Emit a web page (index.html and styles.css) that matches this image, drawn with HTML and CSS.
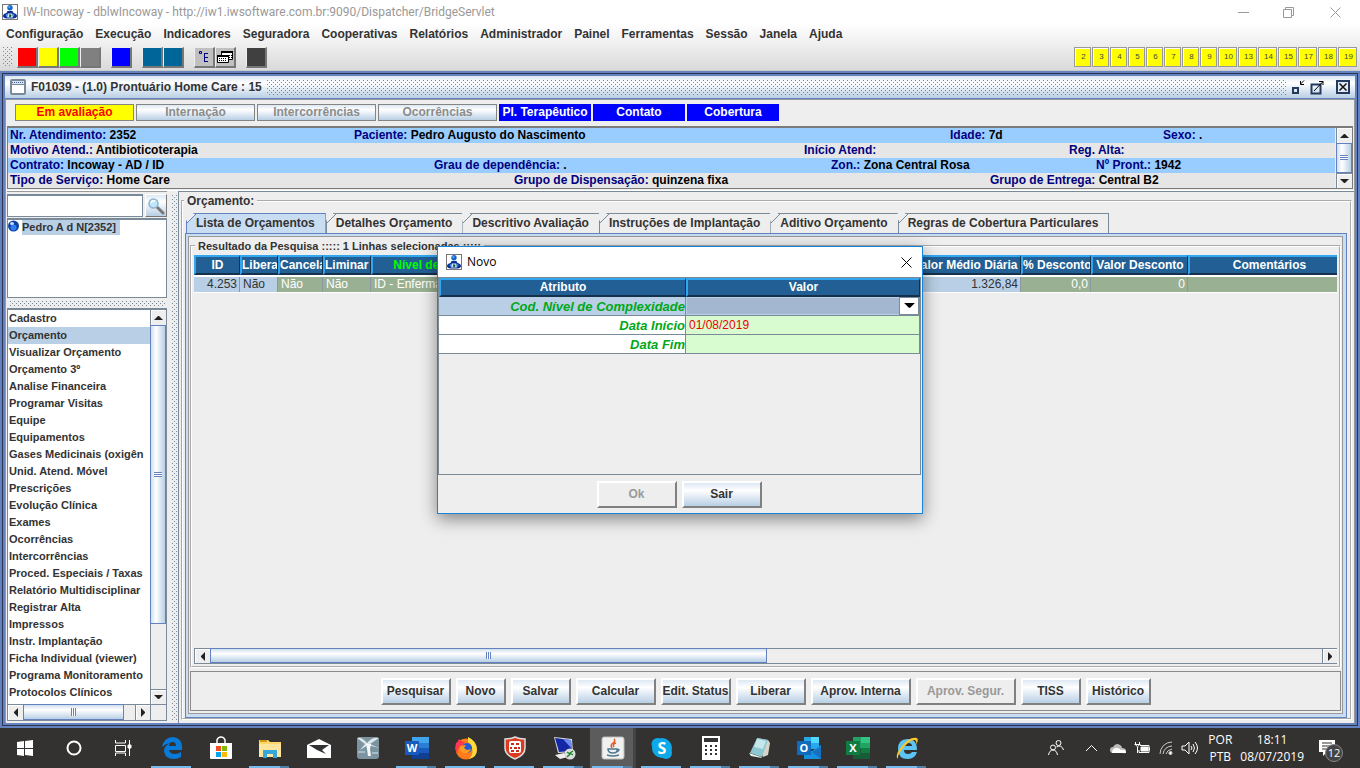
FILE: index.html
```html
<!DOCTYPE html>
<html lang="pt-BR">
<head>
<meta charset="utf-8">
<title>IW-Incoway</title>
<link rel="stylesheet" href="styles.css">
</head>
<body>
<svg class="defs" aria-hidden="true">
  <symbol id="app" viewBox="0 0 16 16"><rect x=".5" y=".5" width="15" height="15" fill="#fff" stroke="#777"/><circle cx="8" cy="3.8" r="2.7" fill="#1766c8"/><circle cx="7.3" cy="3" r="1" fill="#58b4f5"/><path d="M5.500 7h5l1 2q3.500 1 3.500 3t-4 2.500H5Q1 14 1 12t3.500-3z" fill="#0c2f96"/><path d="M3.500 11.500Q4 9.500 6 9.500l-1 3.500zM12.500 11.500q-.5-2-2.500-2l1 3.500z" fill="#3f8be0"/><path d="M6 9.500h4l1 4H5z" fill="#cfe8f7"/><path d="M7.500 10l2 1-1 2.500-1.500-1z" fill="#08501d"/></symbol>
  <symbol id="up" viewBox="0 0 9 5"><path d="M0 5 4 1h1l4 4z"/></symbol>
  <symbol id="down" viewBox="0 0 9 5"><path d="M0 0h9L5 4H4z"/></symbol>
  <symbol id="left" viewBox="0 0 5 9"><path d="M5 0v9L1 5V4z"/></symbol>
  <symbol id="right" viewBox="0 0 5 9"><path d="M0 0v9l4-4V4z"/></symbol>
  <symbol id="close" viewBox="0 0 11 11"><path d="M.5.5l10 10M10.500.5l-10 10" stroke="currentColor" fill="none"/></symbol>
</svg>

<header class="titlebar">
  <svg class="i16"><use href="#app"/></svg>
  <h1>IW-Incoway - dblwIncoway - http://iw1.iwsoftware.com.br:9090/Dispatcher/BridgeServlet</h1>
  <div class="winbtns">
    <button aria-label="Minimizar"><svg width="11" height="11"><path d="M0 5.500h11" stroke="currentColor"/></svg></button>
    <button aria-label="Restaurar"><svg width="11" height="11" fill="none" stroke="currentColor"><path d="M.5 2.500h8v8h-8zM2.500 2.500v-2h8v8h-2"/></svg></button>
    <button aria-label="Fechar"><svg width="11" height="11"><use href="#close"/></svg></button>
  </div>
</header>

<div class="chrome">
  <nav class="menubar">
    <button>Configuração</button><button>Execução</button><button>Indicadores</button><button>Seguradora</button><button>Cooperativas</button><button>Relatórios</button><button>Administrador</button><button>Painel</button><button>Ferramentas</button><button>Sessão</button><button>Janela</button><button>Ajuda</button>
  </nav>
  <div class="toolbar">
    <span class="grip dots"></span>
    <div class="tgroup"><button class="sq red" aria-label="Vermelho"></button><button class="sq yellow" aria-label="Amarelo"></button><button class="sq green" aria-label="Verde"></button><button class="sq gray" aria-label="Cinza"></button></div>
    <div class="tgroup"><button class="sq blue" aria-label="Azul"></button></div>
    <div class="tgroup"><button class="sq teal" aria-label="Painel 1"></button><button class="sq teal" aria-label="Painel 2"></button></div>
    <div class="tgroup">
      <button class="sq silver" aria-label="Árvore"><svg width="17" height="17" fill="none" stroke="#000080"><path d="M4.500 3.500h2v2h-2zM9 5.500h4M9.500 5v9M9 9.500h4M9 13.500h4"/></svg></button>
      <button class="sq silver" aria-label="Janelas"><svg width="17" height="17"><path d="M5.500 3.500h11v8h-11z" fill="#fff" stroke="#000"/><path d="M5 3h12v2H5z"/><path d="M7 7.500h9M7 9.500h9" stroke="#000" stroke-dasharray="1 1"/><path d="M1.500 7.500h11v7h-11z" fill="#fff" stroke="#000"/><path d="M1 7h12v2H1z"/><path d="M3 10.500h8M3 12.500h8" stroke="#000" stroke-dasharray="1 1"/></svg></button>
    </div>
    <div class="tgroup"><button class="sq dark" aria-label="Sair"></button></div>
    <div class="numbers">
      <button>2</button><button>3</button><button>4</button><button>5</button><button>6</button><button>7</button><button>8</button><button>9</button><button class="wide">10</button><button class="wide">13</button><button class="wide">14</button><button class="wide">15</button><button class="wide">17</button><button class="wide">18</button><button class="wide">19</button>
    </div>
  </div>
</div>

<main class="frame">
  <div class="frame-title">
    <svg width="16" height="16"><rect x="1" y="1" width="14" height="14" rx="1" fill="#fff" stroke="#7a8a99" stroke-width="2"/><path d="M2 2h12v3H2z" fill="#d5e2f0"/><path d="M2 3.500h12" stroke="#4a65a0" stroke-dasharray="1 1"/><path d="M1 5.500h14" stroke="#7a8a99"/></svg>
    <h2>F01039 - (1.0) Prontuário Home Care : 15</h2>
    <span class="bumps dots"></span>
    <button aria-label="Minimizar"><svg width="14" height="15" fill="none"><path d="M2 8h5v5H2z" stroke="#23395d" stroke-width="2"/><path d="M13 .5 9.500 4M9.500 1v3.500H13" stroke="#000"/></svg></button>
    <button aria-label="Maximizar"><svg width="14" height="15" fill="none"><path d="M1.500 4.500h9v9h-9z" stroke="#23395d" stroke-width="2"/><path d="M4 11 13 1.500M9 1.500h4V5" stroke="#000"/></svg></button>
    <button class="fclose" aria-label="Fechar"><svg width="14" height="14" fill="none"><path d="M1 1h12v12H1z" stroke="#23395d" stroke-width="2" fill="#e2ecf6"/><path d="M3.500 3.500l7 7M10.500 3.500l-7 7" stroke="#111" stroke-width="1.500"/></svg></button>
  </div>

  <div class="frame-body">
    <div class="states">
      <button class="state on">Em avaliação</button><button class="state" disabled>Internação</button><button class="state" disabled>Intercorrências</button><button class="state" disabled>Ocorrências</button><button class="state link">Pl. Terapêutico</button><button class="state link">Contato</button><button class="state link">Cobertura</button>
    </div>

    <section class="info">
      <div class="info-rows">
        <div class="r1"><span><b>Nr. Atendimento:</b> 2352</span><span><b>Paciente:</b> Pedro Augusto do Nascimento</span><span><b>Idade:</b> 7d</span><span><b>Sexo:</b> .</span></div>
        <div class="r2"><span><b>Motivo Atend.:</b> Antibioticoterapia</span><span><b>Início Atend:</b></span><span><b>Reg. Alta:</b></span></div>
        <div class="r3"><span><b>Contrato:</b> Incoway - AD / ID</span><span><b>Grau de dependência:</b> .</span><span><b>Zon.:</b> Zona Central Rosa</span><span><b>Nº Pront.:</b> 1942</span></div>
        <div class="r4"><span><b>Tipo de Serviço:</b> Home Care</span><span><b>Grupo de Dispensação:</b> quinzena fixa</span><span><b>Grupo de Entrega:</b> Central B2</span></div>
      </div>
      <div class="vscroll">
        <button aria-label="Subir"><svg width="9" height="5"><use href="#up"/></svg></button>
        <span class="thumb fill"></span>
        <button aria-label="Descer"><svg width="9" height="5"><use href="#down"/></svg></button>
      </div>
    </section>

    <div class="split">
      <aside class="side">
        <div class="search">
          <input type="text" aria-label="Pesquisar paciente">
          <button aria-label="Pesquisar"><svg width="18" height="18" viewBox="0 0 18 18"><path d="M10.500 10.500 16 16" stroke="#777" stroke-width="3" stroke-linecap="round"/><circle cx="6.500" cy="6.500" r="4.500" fill="#bfe6fb" stroke="#8fb4cf" stroke-width="1.500"/><path d="M4 6q1-3 4-2" stroke="#fff" stroke-width="1.500" fill="none"/></svg></button>
        </div>
        <div class="tree">
          <svg width="12" height="12"><circle cx="5.500" cy="6" r="5.500" fill="#0c3fa8"/><circle cx="5.500" cy="7.500" r="3" fill="#2f80ee"/><ellipse cx="4" cy="3.500" rx="2" ry="1.500" fill="#c9e2ff"/></svg>
          <button>Pedro A d N[2352]</button>
        </div>
        <div class="hsplit dots"></div>
        <div class="listbox">
          <ul>
            <li><button>Cadastro</button></li><li><button class="sel">Orçamento</button></li><li><button>Visualizar Orçamento</button></li><li><button>Orçamento 3º</button></li><li><button>Analise Financeira</button></li><li><button>Programar Visitas</button></li><li><button>Equipe</button></li><li><button>Equipamentos</button></li><li><button>Gases Medicinais (oxigên</button></li><li><button>Unid. Atend. Móvel</button></li><li><button>Prescrições</button></li><li><button>Evolução Clínica</button></li><li><button>Exames</button></li><li><button>Ocorrências</button></li><li><button>Intercorrências</button></li><li><button>Proced. Especiais / Taxas</button></li><li><button>Relatório Multidisciplinar</button></li><li><button>Registrar Alta</button></li><li><button>Impressos</button></li><li><button>Instr. Implantação</button></li><li><button>Ficha Individual (viewer)</button></li><li><button>Programa Monitoramento</button></li><li><button>Protocolos Clínicos</button></li>
          </ul>
          <div class="vscroll">
            <button aria-label="Subir"><svg width="9" height="5"><use href="#up"/></svg></button>
            <span class="thumb list-thumb"></span><span class="track"></span>
            <button aria-label="Descer"><svg width="9" height="5"><use href="#down"/></svg></button>
          </div>
          <div class="hscroll">
            <button aria-label="Esquerda"><svg width="5" height="9"><use href="#left"/></svg></button>
            <span class="hthumb side-thumb"></span><span class="track"></span>
            <button aria-label="Direita"><svg width="5" height="9"><use href="#right"/></svg></button>
          </div>
          <div class="corner"></div>
        </div>
      </aside>
      <div class="vsplit dots"></div>

      <section class="work">
        <fieldset class="group outer">
          <legend>Orçamento:</legend>
          <div class="tabs" role="tablist">
            <button role="tab" aria-selected="true">Lista de Orçamentos</button><button role="tab">Detalhes Orçamento</button><button role="tab">Descritivo Avaliação</button><button role="tab">Instruções de Implantação</button><button role="tab">Aditivo Orçamento</button><button role="tab">Regras de Cobertura Particulares</button>
          </div>
          <div class="pane">
            <div class="pane-in">
              <fieldset class="group results">
                <legend>Resultado da Pesquisa ::::: 1 Linhas selecionadas :::::</legend>
                <div class="grid-wrap">
                  <table class="grid">
                    <colgroup><col class="c-id"><col class="c-lib"><col class="c-can"><col class="c-lim"><col class="c-niv"><col class="c-rest"><col class="c-med"><col class="c-pct"><col class="c-val"><col class="c-com"></colgroup>
                    <thead><tr><th>ID</th><th>Libera</th><th>Cancela</th><th class="fit">Liminar</th><th class="key">Nível de Complexidade</th><th></th><th>Valor Médio Diária</th><th>% Desconto</th><th>Valor Desconto</th><th>Comentários</th></tr></thead>
                    <tbody><tr><td class="num ro">4.253</td><td class="ro">Não</td><td>Não</td><td>Não</td><td>ID - Enfermagem</td><td></td><td class="num ro">1.326,84</td><td class="num">0,0</td><td class="num">0</td><td></td></tr></tbody>
                  </table>
                </div>
                <div class="hscroll wide-scroll">
                  <button aria-label="Esquerda"><svg width="5" height="9"><use href="#left"/></svg></button>
                  <span class="hthumb fill"></span><span class="track"></span>
                  <button aria-label="Direita"><svg width="5" height="9"><use href="#right"/></svg></button>
                </div>
              </fieldset>
              <div class="actions">
                <button class="btn w70">Pesquisar</button><button class="btn w50">Novo</button><button class="btn w60">Salvar</button><button class="btn w80">Calcular</button><button class="btn w70">Edit. Status</button><button class="btn w70">Liberar</button><button class="btn w100">Aprov. Interna</button><button class="btn w100" disabled>Aprov. Segur.</button><button class="btn w60">TISS</button><button class="btn w65">Histórico</button>
              </div>
            </div>
          </div>
        </fieldset>
      </section>
    </div>
  </div>
</main>

<div class="dialog" role="dialog" aria-labelledby="dlg-title">
  <div class="dialog-title">
    <svg class="i16"><use href="#app"/></svg>
    <h2 id="dlg-title">Novo</h2>
    <button aria-label="Fechar"><svg width="11" height="11"><use href="#close"/></svg></button>
  </div>
  <div class="dialog-area">
    <table class="form">
      <thead><tr><th class="attr">Atributo</th><th>Valor</th></tr></thead>
      <tbody>
        <tr class="active"><td><label for="nivel">Cod. Nível de Complexidade</label></td><td><span class="combo"><select id="nivel"><option></option></select><span class="combo-arrow"><svg width="11" height="6" viewBox="0 0 9 5"><use href="#down"/></svg></span></span></td></tr>
        <tr><td><label for="inicio">Data Início</label></td><td class="edit"><input id="inicio" type="text" value="01/08/2019"></td></tr>
        <tr><td><label for="fim">Data Fim</label></td><td class="edit"><input id="fim" type="text"></td></tr>
      </tbody>
    </table>
  </div>
  <div class="dialog-actions"><button class="btn w80" disabled>Ok</button><button class="btn w80">Sair</button></div>
</div>

<footer class="taskbar">
  <div class="apps">
    <button aria-label="Iniciar"><svg viewBox="0 0 24 24"><path d="M4 6l7-1v7H4zM12 5l8-1v8h-8zM4 13h7v7l-7-1zM12 13h8v7l-8-1z" fill="#fff"/></svg></button>
    <button aria-label="Cortana"><svg viewBox="0 0 24 24"><circle cx="12" cy="12" r="6.500" fill="none" stroke="#fff" stroke-width="2"/></svg></button>
    <button aria-label="Visão de tarefas"><svg viewBox="0 0 24 24" fill="none" stroke="#fff"><path d="M4.500 4v3h10V4M4.500 9.500h10v6h-10zM4.500 20v-3h10v3M18.500 4v16" /><path d="M17 9h3v3h-3z" fill="#fff"/></svg></button>
    <button class="run one" aria-label="Edge"><svg viewBox="0 0 24 24"><path d="M2 11Q4 1 13 1q9 1 9 10v3H9q1 4 6 4 3 0 6-2v5q-3 2-7 2-9 0-10-8 0-5 6-8Q5 8 2 11zm7-1h7q0-4-3.500-4Q9.500 6 9 10z" fill="#0a7ad8"/></svg></button>
    <button aria-label="Loja"><svg viewBox="0 0 24 24"><path d="M8 7V4q1-3 4-3t4 3v3" stroke="#fff" stroke-width="1.500" fill="none"/><path d="M1 7h22v15q0 1-1 1H2q-1 0-1-1z" fill="#fff"/><path d="M7 10h5v5H7z" fill="#f25022"/><path d="M13 10h5v5h-5z" fill="#7fba00"/><path d="M7 16h5v5H7z" fill="#00a4ef"/><path d="M13 16h5v5h-5z" fill="#ffb900"/></svg></button>
    <button class="run" aria-label="Explorador"><svg viewBox="0 0 24 24"><path d="M1 4h9l2 2h11v15H1z" fill="#ffd768"/><path d="M1 8h22v13H1z" fill="#ffe69c"/><path d="M2 4h7v2H2z" fill="#d69b16"/><path d="M5 14h14v8h-4v-4H9v4H5z" fill="#35a7dd"/></svg></button>
    <button aria-label="Email"><svg viewBox="0 0 24 24"><path d="M0 9l12-6 12 6v13H0z" fill="#fff"/><path d="M2 9h20l-7 5 4 4-9-4z" fill="#333"/></svg></button>
    <button aria-label="Biblioteca"><svg viewBox="0 0 24 24"><rect x="1" y="1" width="22" height="22" rx="3" fill="#7c93a0"/><path d="M1 2q5-1 10 5 5-6 12-5L14 8l9 4-11-3-8 5 5-6z" fill="#dce7ec"/><path d="M10 8h5l-1 5 1 7h-3l-1-7z" fill="#f4f8fa"/><path d="M2 16h7M16 17h6" stroke="#a9bdc8" stroke-width="2"/></svg></button>
    <button class="run" aria-label="Word"><svg viewBox="0 0 24 24"><path d="M7 1h17v6H7z" fill="#41a5ee"/><path d="M7 7h17v5H7z" fill="#2b7cd3"/><path d="M7 12h17v5H7z" fill="#185abd"/><path d="M7 17h17v6H7z" fill="#103f91"/><path d="M0 5h14v14H0z" fill="#185abd"/><text x="7" y="16" class="glyph">W</text></svg></button>
    <button class="run one" aria-label="Firefox"><svg viewBox="0 0 24 24"><circle cx="12" cy="13" r="10.500" fill="#ff7b1c"/><path d="M14 1q9 4 9 13 0 7-8 9 5-5 3-11-1-4-4-6z" fill="#ffdc3c"/><path d="M2 7q2-1 3-4 2 3 6 3l-3 4q-5 1-4 8-4-4-2-11z" fill="#ff3850"/><circle cx="13" cy="12" r="5" fill="#245bd1"/><path d="M6 10l6-1-2 3 3 2 4-1q-2 5-7 4t-4-7z" fill="#ff9b20"/></svg></button>
    <button class="run one" aria-label="Segurança"><svg viewBox="0 0 24 24"><path d="M2 3q6 0 10-2 4 2 10 2v9q0 7-10 11Q2 19 2 12z" fill="#db3b20" stroke="#ddd" stroke-width="1.500"/><rect x="6" y="5" width="12" height="12" rx="2" fill="#fff"/><path d="M8 7h3v2H8zM13 7h3v2h-3zM7 11h2v2H7zM11 11h3v2h-3zM15 11h2v2h-2zM8 14h3v2H8zM13 14h3v2h-3z" fill="#c92d18"/></svg></button>
    <button class="run" aria-label="Área remota"><svg viewBox="0 0 24 24"><path d="M2 1l18 2 1 13-15 1z" fill="#ddd"/><path d="M3 2l16 2 1 11-13 1z" fill="#1427a6"/><path d="M11 3l8 1 1 9z" fill="#6d8cf0"/><path d="M3 19l9-2 4 4-8 2z" fill="#eee"/><circle cx="18" cy="18" r="5.500" fill="#ddd"/><path d="M15 16l3 2-3 3M21 15l-3 2 3 2" stroke="#198c35" stroke-width="1.500" fill="none"/></svg></button>
    <button class="run current" aria-label="Java"><svg viewBox="0 0 24 24"><rect x="1" y="1" width="22" height="22" rx="2" fill="#f1f1ef" stroke="#bcbcbc"/><path d="M13 3q2 2-1 4t-1 5M15 7q-4 1-2 4" stroke="#e45b2a" stroke-width="1.500" fill="none"/><path d="M7 13h9q1 4-4 4t-5-4zM16 13q4 0 0 3M6 19q6 2 12 0" stroke="#4d7890" stroke-width="1.500" fill="none"/></svg></button>
    <button class="run one" aria-label="Skype"><svg viewBox="0 0 24 24"><circle cx="7.500" cy="8" r="6" fill="#0ea9ea"/><circle cx="16" cy="17" r="6" fill="#0ea9ea"/><circle cx="12" cy="12" r="10" fill="#0ea9ea"/><text x="12" y="18" class="glyph big">S</text></svg></button>
    <button class="run" aria-label="Calculadora"><svg viewBox="0 0 24 24"><path d="M3 0h18v24H3z" fill="#fff"/><path d="M5 2h14v4H5z" fill="#333"/><path d="M6 10h12M6 14h12M6 18h12" stroke="#333" stroke-width="2" stroke-dasharray="2 3"/></svg></button>
    <button class="run" aria-label="Bloco de notas"><svg viewBox="0 0 24 24"><path d="M9 2l11 2 2 3-2 12-5 2z" fill="#d8d5c8"/><path d="M9 2l11 2-6 17-12-4z" fill="#8dc7d2"/><path d="M9 3l9 2-3 8-9-2z" fill="#c6e7e9"/><path d="M1 17l12 4 1 1-11-2z" fill="#edf4f4"/></svg></button>
    <button class="run" aria-label="Outlook"><svg viewBox="0 0 24 24"><path d="M7 1h15v12H7z" fill="#28a8ea"/><path d="M14 1h8v6h-8z" fill="#50d9ff"/><path d="M7 12l8 3 9-6v14H7z" fill="#1490df"/><path d="M15 16l9-5v12z" fill="#176fc1"/><path d="M0 5h14v14H0z" fill="#0f6cbd"/><text x="7" y="16" class="glyph">O</text></svg></button>
    <button class="run" aria-label="Excel"><svg viewBox="0 0 24 24"><path d="M7 1h17v11H7z" fill="#21a366"/><path d="M15 1h9v6h-9z" fill="#33c481"/><path d="M7 12h17v11H7z" fill="#185c37"/><path d="M15 12h9v5h-9z" fill="#107c41"/><path d="M0 5h14v14H0z" fill="#107c41"/><text x="7" y="16" class="glyph">X</text></svg></button>
    <button class="run" aria-label="Internet Explorer"><svg viewBox="0 0 24 24"><path d="M3 13q0-10 9.500-10T22 14H9q0 4 4 4 3 0 4-2h5q-2 7-9 7-10 0-10-10zm6-3h8q0-3-4-3t-4 3z" fill="#5cc4f4"/><path d="M3 23Q-1 20 7 10T22 2q2 2-1 7 1-4-1-5-4-1-11 7T3 23z" fill="#f8c92b"/></svg></button>
  </div>
  <div class="tray">
    <svg width="18" height="18" fill="none" stroke="#fff"><circle cx="6" cy="8.500" r="2.500"/><path d="M1.500 16q1-5 4.500-5t4.500 5"/><circle cx="11.500" cy="4" r="2.500"/><path d="M9.500 8q5-3 7 3"/></svg>
    <svg class="chev" width="13" height="8" fill="none" stroke="#fff"><path d="M1 7l5.500-5.500L12 7"/></svg>
    <svg width="17" height="11"><path d="M4 10a3 3 0 0 1 0-6q3-5 7-2 2 1 2 3 4 0 4 3t-3 2z" fill="#bbb"/><path d="M3 10q0-5 5-5 2 0 4 2 5-1 5 3z" fill="#fff"/></svg>
    <svg width="17" height="14" fill="none" stroke="#fff"><path d="M6 4.500h9v7H5V9M15.500 6.500v3"/><path d="M7 6h7v4H7z" fill="#fff"/><path d="M1.500 1v3q2 3 4 0V1M.5 3.500h6M3.500 6v6"/></svg>
    <svg width="14" height="14" fill="none" stroke="#ccc"><path d="M1 13A12 12 0 0 1 13 1M4 13a9 9 0 0 1 9-8M7 13q1-4 6-5M10 13q0-2 3-2"/><circle cx="11.500" cy="12" r="1.500" fill="#fff"/></svg>
    <svg width="18" height="14" fill="none" stroke="#fff"><path d="M1 5h3l4-4v12L4 9H1zM10 5q2 2 0 4M12 3q3 4 0 8M14 1q5 6 0 12"/></svg>
    <div class="lang"><span>POR</span><span>PTB</span></div>
    <div class="clock"><span>18:11</span><span>08/07/2019</span></div>
    <div class="notes"><svg width="16" height="16"><path d="M0 0h16v12H8l-4 4v-4H0z" fill="#fff"/><path d="M3 3h10M3 6h10M3 9h7" stroke="#333"/></svg><span>12</span></div>
  </div>
</footer>
</body>
</html>
```

FILE: styles.css
```css
:root {
  --blue: #6382bf;
  --steel: #7a8a99;
  --light: #b8cfe5;
  --face: #eeeeee;
  --metal: linear-gradient(#dde8f3 0%, #ffffff 32%, #b8cfe5 100%);
}
* { box-sizing: border-box; }
body {
  margin: 0;
  min-height: 100vh;
  display: flex;
  flex-direction: column;
  background: var(--face);
  color: #333333;
  font: bold 12px/15px "Liberation Sans", Arial, sans-serif;
}
button, input, select { font: inherit; color: inherit; margin: 0; padding: 0; border: 0; background: none; border-radius: 0; }
button { white-space: nowrap; }
h1, h2, ul { margin: 0; padding: 0; font: inherit; list-style: none; }
svg { display: block; flex: none; }
.defs { position: absolute; width: 0; height: 0; }
.i16 { width: 16px; height: 16px; }
.dots {
  background-image: conic-gradient(from 270deg at 1px 1px, var(--dot, #7a8a99) 90deg, transparent 0), conic-gradient(from 270deg at 1px 1px, var(--dot, #7a8a99) 90deg, transparent 0);
  background-size: 4px 4px;
  background-position: 0 0, 2px 2px;
}

.titlebar { height: 24px; display: flex; align-items: center; gap: 5px; padding-left: 2px; background: #fff; color: #999; }
.titlebar h1 { flex: 1; font: 12px/20px Roboto, sans-serif; }
.winbtns { display: flex; padding-right: 1px; }
.winbtns button { width: 45px; height: 22px; display: grid; place-items: center; }
.winbtns button:last-child { width: 48px; }

.chrome { background: linear-gradient(#ffffff, #dadada); border-bottom: 1px solid #ccc; }
.menubar { display: flex; gap: 12px; height: 20px; padding-left: 6px; }
.toolbar { display: flex; align-items: center; height: 26px; padding: 0 3px; gap: 10px; }
.grip { width: 10px; height: 20px; margin-right: -6px; }
.tgroup { display: flex; }
.sq { width: 21px; height: 21px; border: 1px solid; border-color: #eee #777 #777 #eee; border-right-width: 2px; border-bottom-width: 2px; }
.red { background: #f00; } .yellow { background: #ff0; } .green { background: #0f0; } .gray { background: #808080; }
.blue { background: #00f; } .teal { background: #006699; } .silver { background: #c0c0c0; } .dark { background: #404040; }
.numbers { display: flex; gap: 1px; margin-left: auto; }
.numbers button { width: 17px; height: 20px; background: #ff0; border: 1px solid #999; box-shadow: inset 1px 1px #fff; font: 8px/18px "Liberation Sans", Arial, sans-serif; color: #444; padding-left: 2px; }
.numbers .wide { width: 19px; }

.frame { flex: 1; display: flex; flex-direction: column; padding: 3px; border: 2px solid var(--blue); box-shadow: inset 0 0 0 1px #2a3350, inset 0 0 0 3px var(--blue); }
.frame-title { display: flex; align-items: center; height: 23px; padding: 0 5px; gap: 5px; background: var(--metal); border-bottom: 1px solid var(--blue); --dot: #6382bf; }
.bumps { flex: 1; height: 15px; }
.fclose { margin-left: 7px; }
.frame-body { flex: 1; display: flex; flex-direction: column; background: var(--face); border: 1px solid #999; border-width: 1px 1px 0; padding-left: 1px; }
.states { display: flex; gap: 2px; padding: 4px 8px 5px; }
.state { width: 119px; height: 17px; border: 1px solid #848484; background: var(--metal); color: #8c8c8c; line-height: 15px; }
.state.on { background: #ff0; color: #f00; }
.state.link { width: 92px; background: #00f; border-color: #00f; color: #fff; }

.info { display: flex; margin-right: 1px; border: 1px solid #7a7a7a; border-top-width: 2px; }
.info-rows { flex: 1; min-width: 0; color: #000; padding-right: 1px; }
.info-rows > div { display: grid; background: #e6e6e6; padding-left: 2px; white-space: nowrap; }
.info-rows > div:nth-child(odd) { background: #99ccff; }
.info-rows b { color: #000080; }
.info-rows .r1 { grid-template-columns: 344fr 596fr 213fr 172fr; }
.info-rows .r2 { grid-template-columns: 794fr 265fr 266fr; }
.info-rows .r3 { grid-template-columns: 424fr 397fr 265fr 239fr; }
.info-rows .r4 { grid-template-columns: 504fr 476fr 345fr; }

.vscroll { width: 16px; display: flex; flex-direction: column; border-left: 1px solid var(--steel); background: var(--face); }
.hscroll { height: 16px; display: flex; border-top: 1px solid var(--steel); background: var(--face); }
.vscroll button, .hscroll button { display: grid; place-items: center; fill: #222; box-shadow: inset 1px 1px #fff; }
.vscroll button { height: 15px; }
.hscroll button { width: 15px; }
.vscroll button:last-child { border-top: 1px solid var(--steel); }
.hscroll button:last-child { border-left: 1px solid var(--steel); }
.thumb, .hthumb { position: relative; border: 1px solid var(--blue); }
.thumb { background: linear-gradient(90deg, #cfdfee, #fff 35%, #b8cfe5); margin-left: -1px; }
.hthumb { background: linear-gradient(#cfdfee, #fff 35%, #b8cfe5); margin-top: -1px; }
.thumb::after { content: ""; position: absolute; left: 3px; right: 3px; top: calc(50% - 3px); height: 5px; background: repeating-linear-gradient(var(--blue) 0 1px, #fff 1px 2px); }
.hthumb::after { content: ""; position: absolute; top: 3px; bottom: 3px; left: calc(50% - 3px); width: 5px; background: repeating-linear-gradient(90deg, var(--blue) 0 1px, #fff 1px 2px); }
.fill, .track { flex: 1; }
.list-thumb { flex: 0 0 76%; }
.side-thumb { flex: 0 0 101px; }

.split { flex: 1; display: flex; border-top: 1px solid #fff; margin-top: 1px; }
.side { width: 160px; flex: none; display: flex; flex-direction: column; padding: 2px 0; border-top: 1px solid #999; }
.search { display: flex; gap: 2px; height: 23px; }
.search input { flex: 1; min-width: 0; background: #fff; border: 1px solid var(--steel); border-top-width: 2px; }
.search button { width: 22px; display: grid; place-items: center; background: var(--metal); border: 1px solid #fff; border-right-color: #777; border-bottom-color: #777; }
.tree { display: flex; align-items: flex-start; gap: 2px; height: 80px; margin-top: 1px; background: #fff; border: 1px solid var(--steel); border-top-width: 2px; font-size: 11px; }
.tree button { background: var(--light); padding-right: 4px; line-height: 15px; }
.hsplit { height: 6px; margin: 3px 1px 1px 3px; }
.listbox { flex: 1; display: grid; grid-template: 1fr 16px / minmax(0, 1fr) 16px; background: #fff; border: 1px solid var(--steel); border-top-width: 2px; font-size: 11px; }
.listbox ul { overflow: hidden; }
.listbox li button { display: block; width: 100%; height: 17px; overflow: hidden; padding-left: 1px; text-align: left; }
.listbox .sel { background: var(--light); }
.corner { background: var(--face); border: solid var(--steel); border-width: 1px 0 0 1px; }
.vsplit { width: 5px; flex: none; margin: 4px 0 2px 5px; }

.work { flex: 1; min-width: 0; display: flex; margin-left: 1px; padding: 2px 2px 3px; border: solid var(--steel); border-width: 1px 0 0 1px; }
.group { min-width: 0; margin: 0; border: 2px groove #fff; }
.group legend { margin-left: 1px; padding: 0 3px; line-height: 14px; }
.outer { flex: 1; display: flex; flex-direction: column; padding: 5px 3px 0 2px; }
.outer > legend { margin-left: -1px; }
.tabs { display: flex; padding-left: 1px; }
.tabs button { height: 20px; padding: 0 10px 0 9px; border: 1px solid var(--steel); border-width: 1px 0 0 1px; background: linear-gradient(135deg, transparent 6px, var(--steel) 6px 7px, transparent 7px); clip-path: polygon(0 8px, 8px 0, 100% 0, 100% 100%, 0 100%); }
.tabs button:last-child { border-right-width: 1px; }
.tabs button[aria-selected] { background: linear-gradient(135deg, transparent 6px, var(--blue) 6px 7px, #c8ddf2 7px); border-color: var(--blue); border-right-width: 1px; }
.pane { flex: 1; display: flex; padding: 2px 3px 3px 2px; background: #c8ddf2; border: 1px solid var(--blue); }
.pane-in { flex: 1; min-width: 0; display: flex; flex-direction: column; padding: 2px 1px; background: var(--face); border: 1px solid #999; }
.results { flex: 1; display: flex; flex-direction: column; padding: 2px; }
.results legend { font-size: 11px; }
.grid-wrap { flex: 1; min-width: 0; overflow: hidden; display: grid; align-content: start; }
.grid { table-layout: fixed; width: calc(100% + 13px); border-collapse: separate; border-spacing: 0; }
.c-id { width: 46px; } .c-lib { width: 38px; } .c-can { width: 45px; } .c-lim { width: 48px; } .c-niv { width: 175px; }
.c-med { width: 112px; } .c-pct { width: 70px; } .c-val { width: 97px; } .c-com { width: 162px; }
th { height: 20px; padding: 0; background: #225f94; color: #fff; border: solid; border-width: 2px 1px 2px 2px; border-color: #33a6f0 #16314c #16314c #33a6f0; overflow: hidden; white-space: nowrap; }
.grid th:nth-child(2), .grid th:nth-child(3), .grid th.fit { text-align: left; }
.grid th.key { color: #0f0; }
.grid td { height: 18px; padding: 0 3px; background: #9ab093; background-clip: padding-box; color: #fff; font-weight: normal; border: solid #fff; border-width: 2px 0 1px; box-shadow: inset -1px 0 #8b98a3; overflow: hidden; white-space: nowrap; }
.grid td.ro { background-color: var(--light); color: #333; }
.grid td.num { text-align: right; }
.wide-scroll { border: 1px solid var(--steel); border-right: 0; }
.actions { display: flex; justify-content: center; gap: 5px; margin-top: 3px; padding: 6px 0 5px; border: 1px solid #8a8a8a; }
.btn { height: 27px; background: var(--metal); border: 2px solid; border-color: #fff #808080 #808080 #fff; }
.btn:disabled { background: var(--face); color: #999; }
.w50 { width: 50px; } .w60 { width: 60px; } .w65 { width: 65px; } .w70 { width: 70px; } .w80 { width: 80px; } .w100 { width: 100px; }

.dialog { position: absolute; left: calc(50% - 243px); top: 246px; width: 486px; background: var(--face); border: 1px solid #1883d7; box-shadow: 0 5px 16px rgba(0, 0, 0, .45); }
.dialog-title { display: flex; align-items: center; gap: 5px; height: 30px; padding: 0 10px 0 8px; background: #fff; color: #000; }
.dialog-title h2 { flex: 1; font: 12px/20px "Open Sans", sans-serif; }
.dialog-area { min-height: 198px; border: 1px solid var(--steel); margin: 0 1px 0 0; }
.form { width: 100%; table-layout: fixed; border-collapse: separate; border-spacing: 0; }
.form th { height: 19px; line-height: 15px; }
.form .attr { width: 247px; }
.form td { height: 19px; padding: 0; background: #fff; border-bottom: 1px solid var(--steel); border-right: 1px solid var(--steel); font-size: 13px; font-style: italic; color: #00a818; text-align: right; }
.form .active td { background: var(--light); }
.form td.edit { background: #d9fbd0; }
.form input { display: block; width: 100%; height: 18px; padding-left: 3px; font: normal 12px/18px "Liberation Sans", Arial, sans-serif; color: #f00000; outline: 0; }
.combo { display: flex; height: 18px; position: relative; }
.combo select { flex: 1; appearance: none; background: #a3b8d0; border: 1px solid var(--light); }
.combo-arrow { position: absolute; right: 0; top: 0; width: 20px; height: 18px; display: grid; place-items: center; background: #fff; border: 1px solid var(--steel); pointer-events: none; }
.dialog-actions { display: flex; justify-content: center; gap: 5px; padding: 6px 2px 5px 0; }

.taskbar { display: flex; justify-content: space-between; height: 40px; background: #333231; color: #fff; font: 12px/17px "Open Sans", sans-serif; }
.apps { display: flex; }
.apps button { position: relative; width: 49px; display: grid; place-items: center; }
.apps svg { width: 24px; height: 24px; }
.run::after { content: ""; position: absolute; left: 4px; right: 5px; bottom: 0; height: 2px; background: linear-gradient(90deg, #76b9ed 78%, #4f7fa5 78%); }
.run.one::after { background: #76b9ed; }
.current { background: linear-gradient(90deg, transparent 2px, #5c5c5c 2px 45px, #444 45px 48px, transparent 48px); }
.glyph { font: bold 11px "Open Sans", sans-serif; fill: #fff; text-anchor: middle; }
.glyph.big { font-size: 16px; }
.tray { display: flex; align-items: center; gap: 8px; padding-right: 16px; }
.chev { margin: 0 3px 0 12px; }
.lang, .clock { display: flex; flex-direction: column; align-items: center; }
.lang { margin-left: 1px; }
.clock { margin-right: 7px; }
.notes { position: relative; width: 25px; height: 16px; }
.notes span { position: absolute; left: 6px; top: 4px; width: 18px; height: 18px; border: 1px solid #888; border-radius: 50%; background: #444; font-size: 11px; line-height: 16px; text-align: center; }
```
